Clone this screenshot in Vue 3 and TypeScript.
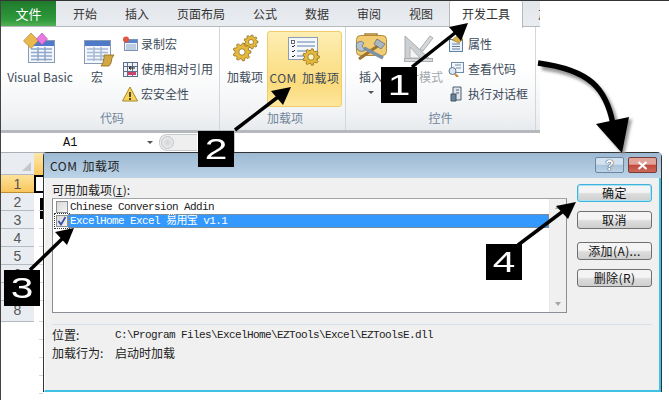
<script setup lang="ts">
const tabs = ["开始", "插入", "页面布局", "公式", "数据", "审阅", "视图"];
const rowNumbers = [2, 3, 4, 5, 6, 7, 8];
const emptyRows = [1, 2, 3, 4];

function pol(cx: number, cy: number, r: number, a: number): string {
  return (cx + r * Math.cos(a)).toFixed(1) + " " + (cy + r * Math.sin(a)).toFixed(1);
}

function gear(cx: number, cy: number, r: number, teeth: number): string {
  const outer = r * 1.28;
  const step = (Math.PI * 2) / teeth;
  const pts: string[] = [];
  for (let i = 0; i < teeth; i++) {
    const a = i * step;
    const w = step * 0.24;
    pts.push(pol(cx, cy, r, a - w * 1.35));
    pts.push(pol(cx, cy, outer, a - w * 0.7));
    pts.push(pol(cx, cy, outer, a + w * 0.7));
    pts.push(pol(cx, cy, r, a + w * 1.35));
  }
  return "M" + pts.join("L") + "Z";
}
</script>

<template>
  <div class="stage">
    <div class="excel">
      <div class="tabbar">
        <div class="file-tab">文件</div>
        <div v-for="t in tabs" :key="t" class="tab">{{ t }}</div>
        <div class="tab active">开发工具</div>
        <div class="tab next">加载项</div>
      </div>

      <div class="ribbon">
        <section class="group code">
          <div class="group-body">
            <div class="big vb">
              <svg width="34" height="36" class="icon">
                <rect x="5.5" y="7.5" width="26" height="22" fill="#f3f6fb" stroke="#8a9bb5" />
                <rect x="6" y="8" width="25" height="5" fill="#4f79c9" />
                <path d="M8 16h21M8 19.5h21M8 23h21M8 26.5h21M15 14v14M22 14v14" stroke="#8ea6c9" stroke-width="1.5" fill="none" />
                <path d="M8 0l7.5 7.5L8 15.5 0.5 8z" fill="#e8b94f" stroke="#a67c1f" stroke-width=".6" />
                <path d="M19 0l5.5 6L19 12l-5.5-6z" fill="#e77ae0" stroke="#b044b0" stroke-width=".6" />
              </svg>
              <span>Visual Basic</span>
            </div>
            <div class="big macro">
              <svg width="44" height="36" class="icon">
                <rect x="9.5" y="7.5" width="26" height="23" fill="#f3f6fb" stroke="#8a9bb5" />
                <rect x="10" y="8" width="25" height="5" fill="#4f79c9" />
                <path d="M12 16h21M12 19.5h21M12 23h21M12 26.5h21M19 14v14M26 14v14" stroke="#a5b8d4" stroke-width="1.5" fill="none" />
                <path d="M29 22h10l-2 3-1 5-2 3H26l2-3 1-5z" fill="#d2a846" stroke="#8f6a18" stroke-width=".8" />
              </svg>
              <span>宏</span>
            </div>
            <ul class="small-list">
              <li>
                <svg width="16" height="16">
                  <rect x="2.5" y="3.5" width="13" height="11" fill="#eef3fa" stroke="#7d93b5" />
                  <path d="M3 4h12v3H3z" fill="#5a83c8" />
                  <path d="M4 9h10M4 11h10M4 13h10" stroke="#8ea6c9" />
                  <circle cx="4" cy="3.5" r="3" fill="#e2553f" />
                </svg>
                <span>录制宏</span>
              </li>
              <li>
                <svg width="16" height="16">
                  <rect x="1.5" y="1.5" width="14" height="14" fill="#f2f2f2" stroke="#5d6f8e" />
                  <path d="M1 5.5h15M1 10.5h15M5.5 1v15M10.5 1v15" stroke="#5d6f8e" />
                  <path d="M6 11h8v3H6z" fill="#c8446a" />
                  <path d="M7 7h6M7 7l2-1.5M7 7l2 1.5" stroke="#111" fill="none" />
                </svg>
                <span>使用相对引用</span>
              </li>
              <li>
                <svg width="16" height="16">
                  <path d="M8 1l7.5 14H.5z" fill="#f7d35c" stroke="#a88a2a" />
                  <path d="M8 6v5M8 12v2" stroke="#222" stroke-width="1.5" />
                </svg>
                <span>宏安全性</span>
              </li>
            </ul>
          </div>
          <div class="group-label">代码</div>
        </section>

        <section class="group addins">
          <div class="group-body">
            <div class="big addin">
              <svg width="40" height="36" class="icon">
                <path :d="gear(26, 9, 5.5, 9)" fill="#e6b93c" stroke="#8f6f1a" stroke-width=".8" />
                <circle cx="26" cy="9" r="2.5" fill="#fff" stroke="#8f6f1a" stroke-width=".8" />
                <path :d="gear(17, 19, 7, 9)" fill="#e6b93c" stroke="#8f6f1a" stroke-width=".8" />
                <circle cx="17" cy="19" r="3.2" fill="#fff" stroke="#8f6f1a" stroke-width=".8" />
              </svg>
              <span>加载项</span>
            </div>
            <div class="big com">
              <svg width="73" height="36" class="icon">
                <rect x="20.5" y="3.5" width="29" height="22" fill="#f5f7fb" stroke="#8d9db5" />
                <rect x="23.5" y="6.5" width="3" height="3" fill="#fff" stroke="#445" stroke-width=".8" />
                <path d="M24 12l1 1 2-2M24 17l1 1 2-2M24 22l1 1 2-2" stroke="#223" fill="none" />
                <path d="M29 8h18M29 12h18M29 17h14M29 22h10" stroke="#5f7fb0" />
                <path :d="gear(43, 23, 6.5, 9)" fill="#e6b93c" stroke="#8f6f1a" stroke-width=".8" />
                <circle cx="43" cy="23" r="3.2" fill="#fff4c8" stroke="#8f6f1a" stroke-width=".8" />
              </svg>
              <span class="wide">COM 加载项</span>
            </div>
          </div>
          <div class="group-label">加载项</div>
        </section>

        <section class="group controls">
          <div class="group-body">
            <div class="big insert">
              <svg width="50" height="36" class="icon">
                <path d="M19 3V1h12v2" fill="none" stroke="#a87f2c" stroke-width="1.5" />
                <rect x="10.5" y="2.5" width="30" height="20" rx="4" fill="#f1cc73" stroke="#b18a35" />
                <path d="M13 26L33 12" stroke="#9a7430" stroke-width="3" />
                <path d="M31 6l8 5-4 5-7-5z" fill="#a9b6c2" stroke="#56677a" stroke-width=".7" />
                <path d="M18 15l19 10" stroke="#7c90a6" stroke-width="3.5" />
                <path d="M12 9a5 5 0 0 0 7 8l-3-4 2-3a5 5 0 0 0-6-1z" fill="#b4c2cf" stroke="#56677a" stroke-width=".7" />
              </svg>
              <span>插入</span>
              <i class="caret"></i>
            </div>
            <div class="big design">
              <svg width="46" height="36" class="icon">
                <path d="M9 3l26 24H9z" fill="#cdd0d2" stroke="#a8acaf" />
                <path d="M14 14l10 11H14z" fill="#f4f5f5" stroke="#b1b5b8" />
                <path d="M24 16l10-13 3 2-10 13z" fill="#d5d7d9" stroke="#aaaeb1" />
                <rect x="8.5" y="25.5" width="28" height="3" fill="#d7d9da" stroke="#aaaeb1" />
              </svg>
              <span>设计模式</span>
            </div>
            <ul class="small-list">
              <li>
                <svg width="16" height="16">
                  <rect x="1.5" y="3.5" width="13" height="12" fill="#eef3fa" stroke="#5f7fa0" />
                  <path d="M4 8h8M4 10.5h8M4 13h8" stroke="#5f7fa0" />
                  <path d="M4 4l5-4 6 3-4 4z" fill="#d8b24a" stroke="#8f7320" stroke-width=".6" />
                </svg>
                <span>属性</span>
              </li>
              <li>
                <svg width="16" height="16">
                  <rect x="3.5" y="1.5" width="12" height="10" fill="#f3f6fa" stroke="#6f8bab" />
                  <path d="M7 4h6M8 7h5" stroke="#6f8bab" />
                  <circle cx="4.5" cy="10" r="3.5" fill="#dbe8f3" stroke="#60758d" />
                  <path d="M7 13l3 3" stroke="#c9812d" stroke-width="2" />
                </svg>
                <span>查看代码</span>
              </li>
              <li>
                <svg width="16" height="16">
                  <path d="M5 1h8v13H5z" fill="#dfe5eb" stroke="#4d6172" />
                  <path d="M3 8h5v7H3z" fill="#6a8298" stroke="#3e5263" />
                  <path d="M8 4h3M8 7h3" stroke="#4d6172" />
                </svg>
                <span>执行对话框</span>
              </li>
            </ul>
          </div>
          <div class="group-label">控件</div>
        </section>
      </div>

      <div class="formula-bar">
        <div class="name-box">A1</div>
        <i class="caret name-caret"></i>
        <div class="slider"><b></b></div>
        <div class="formula-input"></div>
      </div>

      <div class="sheet">
        <div class="sheet-head">
          <div class="corner"><i></i></div>
          <div class="col-a"></div>
        </div>
        <div class="row current">
          <div class="row-num">1</div>
          <div class="cell"></div>
        </div>
        <div v-for="n in rowNumbers" :key="n" class="row" :class="['row-' + n, { last: n === 8 }]">
          <div class="row-num">{{ n }}</div>
          <div class="cell"></div>
        </div>
        <div v-for="n in emptyRows" :key="'e' + n" class="row">
          <div class="no-num"></div>
          <div class="cell"></div>
        </div>
      </div>
    </div>

    <div class="dialog">
      <div class="titlebar">
        <span class="title wide">COM 加载项</span>
        <div class="win-btns">
          <div class="win-btn help">?</div>
          <div class="win-btn close">
            <svg width="11" height="9"><path d="M1.5 1l8 7M9.5 1l-8 7" stroke="#fff" stroke-width="2.2" /></svg>
          </div>
        </div>
      </div>
      <div class="dialog-body">
        <div class="top-row">
          <div class="left">
            <div class="list-label">可用加载项(<u>I</u>):</div>
            <div class="listbox">
              <div class="items">
                <div class="item">
                  <span class="check"></span>
                  <span class="item-text">Chinese Conversion Addin</span>
                </div>
                <div class="item selected">
                  <span class="check on">
                    <svg width="10" height="10"><path d="M1.5 5l2.5 3.5L8.5 1" stroke="#3a52a8" stroke-width="1.8" fill="none" /></svg>
                  </span>
                  <span class="item-text">ExcelHome Excel 易用宝 v1.1</span>
                </div>
              </div>
              <div class="scrollbar">
                <i class="up"></i>
                <i class="down"></i>
              </div>
            </div>
          </div>
          <div class="buttons">
            <button class="btn default">确定</button>
            <button class="btn">取消</button>
            <button class="btn spaced">添加(A)...</button>
            <button class="btn">删除(R)</button>
          </div>
        </div>
        <div class="separator"></div>
        <div class="info"><span class="info-key">位置:</span><span class="mono">C:\Program Files\ExcelHome\EZTools\Excel\EZToolsE.dll</span></div>
        <div class="info"><span class="info-key">加载行为:</span><span>启动时加载</span></div>
      </div>
    </div>

    <svg class="arrows" width="669" height="400">
      <defs>
        <filter id="soft" x="-20%" y="-20%" width="140%" height="140%">
          <feGaussianBlur stdDeviation="1.5" />
        </filter>
      </defs>
      <path d="M540 65C590 72 607 90 614 125" fill="none" stroke="#999" stroke-width="6" filter="url(#soft)" transform="translate(2 2)" />
      <path d="M597 124L630 117 622 154z" fill="#999" filter="url(#soft)" transform="translate(2 2)" />
      <path d="M538 63C590 70 606 88 613 124" fill="none" stroke="#000" stroke-width="5.5" />
      <path d="M596 124L629 117 622 153z" fill="#000" />
      <path d="M412 67L455 33" stroke="#000" stroke-width="3.5" />
      <path d="M468 23L461 41 449 27z" fill="#000" />
      <path d="M235 130L278 97" stroke="#000" stroke-width="3.5" />
      <path d="M291 87L283 105 271 91z" fill="#000" />
      <path d="M30 270L63 238" stroke="#000" stroke-width="3.5" />
      <path d="M74 228L67 245 55 232z" fill="#000" />
      <path d="M518 245L562 212" stroke="#000" stroke-width="3.5" />
      <path d="M576 202L568 219 556 206z" fill="#000" />
    </svg>

    <div class="badge b1"><span>1</span></div>
    <div class="badge b2"><span>2</span></div>
    <div class="badge b3"><span>3</span></div>
    <div class="badge b4"><span>4</span></div>
  </div>
</template>

<style>
html,
body {
  margin: 0;
  background: #fff;
}
</style>

<style scoped>
* {
  box-sizing: border-box;
}
.stage {
  position: relative;
  width: 669px;
  height: 400px;
  overflow: hidden;
  background: #fff;
  border-top: 1px solid #333;
  font-family: "Noto Sans CJK SC", "Noto Sans", sans-serif;
  font-size: 12px;
  color: #222;
}
.excel {
  width: 540px;
  height: 399px;
  border-left: 1px solid #444;
  overflow: hidden;
}
.tabbar {
  display: flex;
  height: 26px;
  background: linear-gradient(#e2e6ea, #e9ecf0);
  border-bottom: 1px solid #b5b9be;
  line-height: 25px;
  white-space: nowrap;
}
.file-tab {
  flex: none;
  width: 55px;
  margin-right: 3px;
  text-align: center;
  color: #fff;
  background: linear-gradient(#1f7a2c, #2f9a3c 75%, #55b055);
  font-size: 13px;
}
.tab {
  flex: none;
  padding: 0 14px;
  color: #333;
}
.tab.active {
  height: 27px;
  margin-left: 2px;
  padding: 0 12px;
  color: #333;
  background: #fff;
  border-left: 1px solid #b5b9be;
  border-right: 1px solid #b5b9be;
  border-radius: 2px 2px 0 0;
}
.tab.next {
  padding-left: 15px;
}
.wide {
  letter-spacing: 0.5px;
  word-spacing: 2px;
}
.ribbon {
  display: flex;
  height: 106px;
  background: linear-gradient(#fff 40%, #f0f2f4 85%, #e8ebee);
  border-bottom: 3px solid #b5b8bc;
}
.group {
  display: flex;
  flex: none;
  flex-direction: column;
  padding-top: 4px;
  border-right: 1px solid #d3d7db;
}
.group.code {
  width: 219px;
  padding-left: 4px;
}
.group.addins {
  width: 126px;
  padding-left: 5px;
}
.group.controls {
  width: 190px;
}
.group-body {
  display: flex;
  height: 79px;
}
.group-label {
  height: 16px;
  line-height: 16px;
  text-align: center;
  color: #71849b;
}
.big {
  display: flex;
  flex: none;
  flex-direction: column;
  align-items: center;
  height: 76px;
  padding-top: 2px;
  color: #3d4a5a;
  white-space: nowrap;
}
.big .icon {
  display: block;
  flex: none;
  overflow: visible;
}
.big span {
  line-height: 16px;
}
.vb {
  width: 70px;
}
.macro {
  width: 44px;
  margin-right: 3px;
}
.addin {
  width: 40px;
  margin-right: 2px;
}
.com {
  width: 75px;
  background: linear-gradient(#fdeeb3, #fbdb7c 70%, #fde79d);
  border: 1px solid #f2cc66;
  border-radius: 3px;
}
.insert {
  width: 50px;
}
.design {
  width: 46px;
  margin-right: 6px;
  color: #a3a8ae;
}
.caret {
  display: block;
  width: 0;
  height: 0;
  margin-top: 6px;
  border-top: 3px solid #555;
  border-left: 3.5px solid transparent;
  border-right: 3.5px solid transparent;
}
.small-list {
  list-style: none;
  margin: 0;
  padding: 0;
}
.small-list li {
  display: flex;
  align-items: center;
  height: 25px;
  gap: 3px;
  color: #3d4a5a;
  white-space: nowrap;
}
.controls .small-list li {
  gap: 4px;
}
.formula-bar {
  display: flex;
  align-items: center;
  height: 20px;
  border-bottom: 1px solid #aab0b6;
}
.name-box {
  flex: none;
  width: 84px;
  margin-left: 62px;
  font-family: "Liberation Mono", monospace;
  font-size: 12px;
  color: #111;
}
.name-caret {
  margin: 0;
}
.slider {
  flex: none;
  width: 38px;
  height: 17px;
  margin-left: 6px;
  background: #efefef;
  border-radius: 8px 0 0 8px;
  border: 1px solid #c8ccd0;
  border-right: none;
}
.slider b {
  display: block;
  width: 13px;
  height: 13px;
  margin: 1px 0 0 1px;
  border-radius: 50%;
  background: radial-gradient(#d0d3d6, #f4f5f6);
  border: 1px solid #c0c4c8;
}
.formula-input {
  flex: 1;
  height: 100%;
  margin-left: 37px;
  border-left: 1px solid #c4c8cc;
}
.sheet {
  width: 42px;
}
.sheet-head {
  display: flex;
  height: 22px;
}
.corner {
  position: relative;
  width: 33px;
  background: #e9edf2;
  border-bottom: 1px solid #b4bac1;
}
.corner i {
  position: absolute;
  right: 3px;
  bottom: 3px;
  width: 0;
  height: 0;
  border-left: 9px solid transparent;
  border-bottom: 9px solid #c4c8cd;
}
.col-a {
  flex: 1;
  background: linear-gradient(#fde7a8, #fbc75f);
}
.row {
  display: flex;
  height: 18px;
}
.row.last {
  height: 21px;
}
.row-num,
.no-num {
  flex: none;
  width: 33px;
}
.row-num {
  text-align: center;
  line-height: 18px;
  font-family: "Liberation Sans", sans-serif;
  font-size: 14px;
  color: #555;
  background: #e9edf2;
  border-bottom: 1px solid #b4bac1;
}
.cell {
  flex: 1;
  margin-left: 5px;
  border-bottom: 1px solid #d5d8dc;
}
.current .row-num {
  background: linear-gradient(#fde29a, #f9c65c);
  border-bottom: 1px solid #c08e2c;
}
.current .cell {
  margin-left: 0;
  border: 2px solid #000;
  border-right: none;
}
.row-2 .cell {
  background: linear-gradient(#000, #000) right 5px / 3px 100% no-repeat;
}
.row-3 .cell {
  background: linear-gradient(#000, #000) right top / 3px 8px no-repeat;
}
.dialog {
  position: absolute;
  left: 43px;
  top: 151px;
  width: 619px;
  height: 240px;
  display: flex;
  flex-direction: column;
  background: #f0f0f0;
  border: 1px solid #333;
  border-bottom: none;
  border-radius: 4px 5px 0 0;
}
.titlebar {
  display: flex;
  align-items: flex-start;
  justify-content: space-between;
  height: 25px;
  padding: 4px 4px 0 6px;
  background: linear-gradient(#9db9d3, #bcd3e7);
}
.title {
  font-size: 12px;
  line-height: 17px;
  color: #222;
}
.win-btns {
  display: flex;
  gap: 4px;
}
.win-btn {
  display: flex;
  align-items: center;
  justify-content: center;
  width: 29px;
  height: 16px;
  border: 1px solid #6f86a0;
  border-radius: 2px;
  color: #fff;
}
.help {
  background: linear-gradient(#d2e2ee 45%, #a9c5da 50%, #bcd3e4);
  font-family: "Liberation Sans", sans-serif;
  font-weight: 700;
  font-size: 14px;
  text-shadow: 0 0 1px #223, 0 0 1px #223;
}
.close {
  background: linear-gradient(#e0a49a 45%, #c2473a 50%, #c96a5c);
  border-color: #7b3a34;
}
.dialog-body {
  flex: 1;
  padding: 6px 7px 0 7px;
  border-right: 2px solid #3fc2e4;
  border-bottom: 2px solid #3fc2e4;
  border-left: 1px solid #fff;
}
.top-row {
  display: flex;
  gap: 10px;
}
.left {
  flex: none;
  width: 515px;
}
.list-label {
  height: 14px;
  line-height: 12px;
}
.list-label u {
  font-family: "Liberation Mono", monospace;
  font-size: 11px;
}
.listbox {
  display: flex;
  height: 115px;
  background: #fff;
  border: 1px solid #8a8f96;
  border-top-color: #a0a5aa;
}
.items {
  flex: 1;
  min-width: 0;
}
.item {
  display: flex;
  align-items: center;
  height: 15px;
  padding-left: 3px;
}
.item.selected {
  height: 14px;
}
.check {
  display: flex;
  align-items: center;
  justify-content: center;
  flex: none;
  width: 12px;
  height: 12px;
  background: linear-gradient(135deg, #d8d8d8, #f4f4f4);
  border: 1px solid #8e8f8f;
}
.item-text,
.mono {
  font-family: "Liberation Mono", "Noto Sans CJK SC", monospace;
  font-size: 11px;
  letter-spacing: -0.6px;
  white-space: nowrap;
}
.item-text {
  flex: 1;
  padding-left: 2px;
  line-height: 14px;
  height: 14px;
  overflow: hidden;
}
.selected .item-text {
  color: #fff;
  background: #3399ff;
  outline: 1px dotted #c08040;
  outline-offset: -1px;
}
.selected .check {
  outline: 1px dotted #333;
  outline-offset: 1px;
}
.scrollbar {
  position: relative;
  flex: none;
  width: 17px;
  background: #f0f0f0;
  border-left: 1px solid #e8e8e8;
}
.scrollbar i {
  position: absolute;
  left: 5px;
  width: 0;
  height: 0;
  border-left: 3.5px solid transparent;
  border-right: 3.5px solid transparent;
}
.scrollbar .up {
  top: 6px;
  border-bottom: 4px solid #a6a6a6;
}
.scrollbar .down {
  bottom: 6px;
  border-top: 4px solid #a6a6a6;
}
.buttons {
  display: flex;
  flex: none;
  flex-direction: column;
  gap: 9px;
  width: 75px;
}
.btn {
  height: 18px;
  padding: 0;
  font: inherit;
  line-height: 16px;
  letter-spacing: 0.4px;
  color: #111;
  background: linear-gradient(#f4f4f4 45%, #dcdcdc 55%, #cfcfcf);
  border: 1px solid #707070;
  border-radius: 3px;
}
.btn.default {
  border-color: #3fb3dc;
  box-shadow: 0 0 0 1px #a8e2f5 inset;
}
.btn.spaced {
  margin-top: 4px;
}
.separator {
  height: 1px;
  margin-top: 11px;
  background: #d5dfe5;
}
.info {
  display: flex;
  height: 18px;
  line-height: 18px;
}
.separator + .info {
  margin-top: 1px;
}
.info-key {
  width: 63px;
}
.arrows {
  position: absolute;
  left: 0;
  top: -1px;
  pointer-events: none;
}
.badge {
  position: absolute;
  display: flex;
  align-items: center;
  justify-content: center;
  width: 36px;
  height: 36px;
  background: #000;
  color: #fff;
  font-family: "Liberation Sans", sans-serif;
  font-size: 29px;
}
.badge span {
  display: block;
  line-height: 36px;
  transform: scaleX(1.4);
}
.b1 {
  left: 381px;
  top: 66px;
}
.b2 {
  left: 198px;
  top: 130px;
}
.b3 {
  left: 4px;
  top: 269px;
}
.b4 {
  left: 486px;
  top: 243px;
}
</style>
